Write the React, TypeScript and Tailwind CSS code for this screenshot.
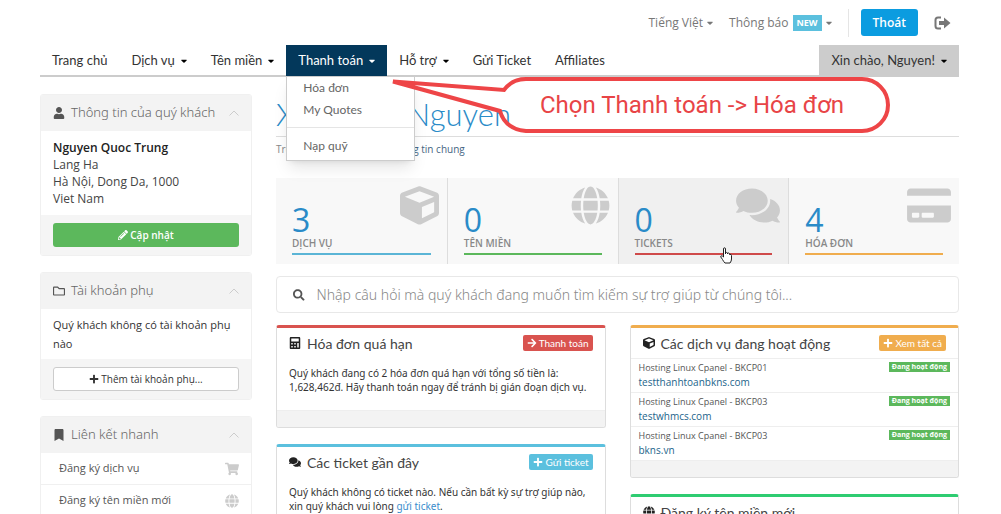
import type { ReactNode } from 'react';
import type { IconType } from 'react-icons';
import {
  FaArrowRight,
  FaBookmark,
  FaCalculator,
  FaCaretDown,
  FaComments,
  FaCreditCard,
  FaCube,
  FaGlobe,
  FaPencilAlt,
  FaPlus,
  FaRegFolder,
  FaSearch,
  FaShoppingCart,
  FaUser,
} from 'react-icons/fa';

type NavItem = {
  label: string;
  menu?: boolean;
};

const NAV_ITEMS: NavItem[] = [
  { label: 'Trang chủ' },
  { label: 'Dịch vụ', menu: true },
  { label: 'Tên miền', menu: true },
  { label: 'Thanh toán', menu: true },
  { label: 'Hỗ trợ', menu: true },
  { label: 'Gửi Ticket' },
  { label: 'Affiliates' },
];

const TILES = [
  { label: 'Dịch vụ', count: 3, icon: FaCube, line: 'bg-[#5bb5d6]', active: false },
  { label: 'Tên miền', count: 0, icon: FaGlobe, line: 'bg-[#5cb85c]', active: false },
  { label: 'Tickets', count: 0, icon: FaComments, line: 'bg-[#cf4a4a]', active: true },
  { label: 'Hóa đơn', count: 4, icon: FaCreditCard, line: 'bg-[#f0ad4e]', active: false },
];

const SERVICES = [
  { name: 'Hosting Linux Cpanel - BKCP01', domain: 'testthanhtoanbkns.com' },
  { name: 'Hosting Linux Cpanel - BKCP03', domain: 'testwhmcs.com' },
  { name: 'Hosting Linux Cpanel - BKCP03', domain: 'bkns.vn' },
];

const SHORTCUTS = [
  { label: 'Đăng ký dịch vụ', icon: FaShoppingCart },
  { label: 'Đăng ký tên miền mới', icon: FaGlobe },
];

function BillingMenu() {
  return (
    <div className="absolute left-0 top-full z-20 w-[129px] border border-[#ccc] bg-white pb-1 text-[12px] text-[#666] shadow-lg">
      <a href="#invoices" className="block px-4 py-px leading-5">Hóa đơn</a>
      <a href="#quotes" className="block px-4 py-px leading-5">My Quotes</a>
      <hr className="mb-1 mt-1.5 border-[#e5e5e5]" />
      <a href="#funds" className="block px-4 pt-1 leading-5">Nạp quỹ</a>
    </div>
  );
}

// Speech bubble pointing at the invoices entry
function Callout() {
  return (
    <div className="pointer-events-none absolute left-[352px] top-[30px] z-30 h-[58px] w-[500px]">
      <svg viewBox="0 0 500 58" className="absolute inset-0 h-full w-full" fill="none">
        <path
          d="M1 6.500 L112 15 Q120 4 134 4 H470 A26 26 0 0 1 470 56 H134 Q113 54 108 36 Z"
          stroke="#ee4547"
          strokeWidth="4"
        />
      </svg>
      <p className="relative pl-[148px] pt-3 font-['Roboto',sans-serif] text-[24px] leading-9 text-[#e84446]">
        Chọn Thanh toán -&gt; Hóa đơn
      </p>
    </div>
  );
}

function TopBar() {
  return (
    <div className="flex h-[45px] items-center justify-end pr-2 text-[12px] text-[#777]">
      <button className="flex items-center gap-1">
        Tiếng Việt
        <FaCaretDown className="h-2.5 w-1.5" />
      </button>
      <button className="ml-4 flex items-center gap-1">
        Thông báo
        <span className="bg-[#5bc0de] px-1 text-[9px] font-bold leading-4 text-white">NEW</span>
        <FaCaretDown className="h-2.5 w-1.5" />
      </button>
      <span className="ml-4 h-7 border-l border-[#e5e5e5]" />
      <button className="ml-3 h-[27px] rounded-[3px] bg-[#0b9ce0] px-3 font-semibold text-white">Thoát</button>
      <a href="#logout" aria-label="Thoát" className="ml-4">
        <svg viewBox="0 0 17 14" className="h-3.5 w-[17px]" fill="none">
          <path d="M7 1.500H4Q1.500 1.500 1.500 4V10Q1.500 12.500 4 12.500H7" stroke="#777" strokeWidth="2" />
          <path d="M5 5H10V1.500L16.500 7L10 12.500V9H5Z" fill="#777" />
        </svg>
      </a>
    </div>
  );
}

function NavBar() {
  return (
    <nav className="relative flex h-8 justify-between border-b-2 border-[#ccc] font-['Lato','Open_Sans',sans-serif] text-[13px] text-[#333]">
      <div className="flex">
        {NAV_ITEMS.map((item) => {
          const open = item.label === 'Thanh toán';
          return (
            <div key={item.label} className="relative h-[31px]">
              {item.menu ? (
                <button className={`flex h-full items-center gap-1.5 px-3 ${open ? 'bg-[#03385b] text-white' : ''}`}>
                  {item.label}
                  <FaCaretDown className={`h-3 w-1.5 ${open ? 'text-white' : 'text-black'}`} />
                </button>
              ) : (
                <a href="#page" className="flex h-full items-center px-3">{item.label}</a>
              )}
              {open && <BillingMenu />}
            </div>
          );
        })}
      </div>
      <button className="flex h-8 items-center gap-1.5 bg-[#ccc] px-3">
        Xin chào, Nguyen!
        <FaCaretDown className="h-3 w-1.5 text-black" />
      </button>
      <Callout />
    </nav>
  );
}

function SidePanel({ title, icon: Icon, children }: { title: string; icon: IconType; children: ReactNode }) {
  return (
    <section className="overflow-hidden rounded-[3px] border border-[#f0f0f0] bg-white">
      <header className="flex h-9 items-center gap-1.5 bg-[#f3f3f3] px-3">
        <Icon className="size-3 shrink-0 text-[#555]" />
        <h3 className="whitespace-nowrap font-['Noto_Sans',sans-serif] text-[13px] font-light text-[#666]">{title}</h3>
        <svg viewBox="0 0 10 6" className="ml-auto h-1.5 w-2.5 shrink-0" fill="none" stroke="#ccc">
          <path d="M.5 5.500L5 1L9.500 5.500" />
        </svg>
      </header>
      {children}
    </section>
  );
}

function Sidebar() {
  return (
    <aside className="w-[212px] shrink-0 space-y-4">
      <SidePanel title="Thông tin của quý khách" icon={FaUser}>
        <address className="px-3 pb-2 pt-2 text-[12px] not-italic leading-[17px] text-[#444]">
          <strong className="block font-semibold text-[#222]">Nguyen Quoc Trung</strong>
          Lang Ha
          <br />
          Hà Nội, Dong Da, 1000
          <br />
          Viet Nam
        </address>
        <div className="bg-[#f5f5f5] px-3 py-2">
          <button className="flex h-6 w-full items-center justify-center gap-0.5 rounded-[3px] bg-[#5cb85c] text-[10px] font-semibold text-white">
            <FaPencilAlt className="size-2.5" />
            Cập nhật
          </button>
        </div>
      </SidePanel>

      <SidePanel title="Tài khoản phụ" icon={FaRegFolder}>
        <p className="px-3 py-1.5 text-[11px] leading-[19px] text-[#333]">Quý khách không có tài khoản phụ nào</p>
        <div className="bg-[#f5f5f5] px-3 py-2">
          <button className="flex h-6 w-full items-center justify-center gap-0.5 rounded-[3px] border border-[#ccc] bg-white text-[10px] text-[#333]">
            <FaPlus className="size-2.5" />
            Thêm tài khoản phụ...
          </button>
        </div>
      </SidePanel>

      <SidePanel title="Liên kết nhanh" icon={FaBookmark}>
        {SHORTCUTS.map(({ label, icon: Icon }) => (
          <a
            key={label}
            href="#order"
            className="flex h-8 items-center justify-between border-b border-[#f0f0f0] pl-[18px] pr-3 text-[11px] text-[#555]"
          >
            {label}
            <Icon className="size-3.5 text-[#ccc]" />
          </a>
        ))}
      </SidePanel>
    </aside>
  );
}

type CardProps = {
  title: string;
  icon: IconType;
  accent: string;
  action?: string;
  actionIcon?: IconType;
  actionColor?: string;
  children?: ReactNode;
};

function Card({ title, icon: Icon, accent, action, actionIcon: ActionIcon, actionColor, children }: CardProps) {
  return (
    <section className={`overflow-hidden rounded-[3px] border border-t-[3px] border-x-[#ddd] border-b-[#ddd] bg-white ${accent}`}>
      <header className="flex h-[30px] items-center gap-1.5 px-3 font-['Lato','Open_Sans',sans-serif]">
        <Icon className="size-3 text-[#222]" />
        <h3 className="text-[14px] text-[#444]">{title}</h3>
        {action && ActionIcon && (
          <button className={`ml-auto flex h-4 items-center gap-0.5 rounded-[2px] px-1 text-[10px] text-white ${actionColor}`}>
            <ActionIcon className="size-2.5" />
            {action}
          </button>
        )}
      </header>
      {children}
      <div className="h-[17px] border-t border-[#eee] bg-[#f3f3f3]" />
    </section>
  );
}

function StatTiles() {
  return (
    <div className="grid grid-cols-4">
      {TILES.map(({ label, count, icon: Icon, line, active }, index) => (
        <a
          key={label}
          href="#stat"
          className={`relative block h-[86px] px-4 pt-[25px] ${active ? 'bg-[#f0f0f0]' : 'bg-[#f8f8f8]'} ${index > 0 ? 'border-l border-[#ddd]' : ''}`}
        >
          <Icon className={`absolute right-2 top-2 text-[#ccc] ${index < 2 ? 'size-[39px]' : 'h-[39px] w-11'}`} />
          <div className="text-[32px] leading-[34px] text-[#2a8bc8]">{count}</div>
          <div className="text-[10px] font-semibold uppercase leading-3 text-[#888]">{label}</div>
          <div className={`mt-1 h-0.5 ${line}`} />
          {active && (
            <svg viewBox="0 0 12 17" className="absolute right-[56px] top-[69px] z-10 h-[17px] w-3" fill="#fff" stroke="#222">
              <path
                strokeLinejoin="round"
                d="M3.500 10V2Q3.500 .8 4.500 .8T5.500 2V7V5.800Q6.500 5 7.500 6V7V6.200Q8.500 5.500 9.500 6.600V7.500Q11.500 6.800 11.500 8.500V12Q11.500 14 10 16H5Q3.500 14.500 2.500 12.500L.8 10Q.5 8.800 1.500 8.800T3.500 10Z"
              />
            </svg>
          )}
        </a>
      ))}
    </div>
  );
}

export default function App() {
  return (
    <div className="h-screen overflow-hidden bg-white pl-10 pr-[42px] font-['Open_Sans',sans-serif]">
      <TopBar />
      <NavBar />

      <div className="flex items-start gap-6 pt-[17px]">
        <Sidebar />

        <main className="min-w-0 flex-1">
          <h1 className="h-[43px] border-b border-[#ddd] font-['Lato','Open_Sans',sans-serif] text-[31px] font-light leading-10 text-[#2a8bc8]">
            Xin chào, Nguyen
          </h1>
          <p className="pt-1 text-[10px] leading-4 text-[#888]">
            Trung tâm khách hàng / <a href="#info" className="text-[#456582]">Thông tin chung</a>
          </p>

          <div className="space-y-3 pt-[21px]">
            <StatTiles />

            <label className="flex h-[37px] items-center gap-3 rounded-[4px] border border-[#e8e8e8] px-4">
              <FaSearch className="size-3 text-[#555]" />
              <input
                aria-label="Tìm kiếm"
                placeholder="Nhập câu hỏi mà quý khách đang muốn tìm kiếm sự trợ giúp từ chúng tôi..."
                className="w-full font-['Noto_Sans',sans-serif] text-[14px] font-light outline-none placeholder:text-[#888]"
              />
            </label>

            <div className="grid grid-cols-2 items-start gap-6">
              <div className="space-y-4">
                <Card
                  title="Hóa đơn quá hạn"
                  icon={FaCalculator}
                  accent="border-t-[#d9534f]"
                  action="Thanh toán"
                  actionIcon={FaArrowRight}
                  actionColor="bg-[#d9534f]"
                >
                  <p className="px-3 pb-4 pt-2 font-['Noto_Sans',sans-serif] text-[10px] leading-[14px] text-[#333]">
                    Quý khách đang có 2 hóa đơn quá hạn với tổng số tiền là:
                    <br />
                    1,628,462đ. Hãy thanh toán ngay để tránh bị gián đoạn dịch vụ.
                  </p>
                </Card>
                <Card
                  title="Các ticket gần đây"
                  icon={FaComments}
                  accent="border-t-[#5bc0de]"
                  action="Gửi ticket"
                  actionIcon={FaPlus}
                  actionColor="bg-[#5bc0de]"
                >
                  <p className="px-3 pb-4 pt-2 font-['Noto_Sans',sans-serif] text-[10px] leading-[14px] text-[#333]">
                    Quý khách không có ticket nào. Nếu cần bất kỳ sự trợ giúp nào,
                    <br />
                    xin quý khách vui lòng <a href="#ticket" className="text-[#3a8dcc]">gửi ticket</a>.
                  </p>
                </Card>
              </div>

              <div className="space-y-4">
                <Card
                  title="Các dịch vụ đang hoạt động"
                  icon={FaCube}
                  accent="border-t-[#f0ad4e]"
                  action="Xem tất cả"
                  actionIcon={FaPlus}
                  actionColor="bg-[#f0ad4e]"
                >
                  {SERVICES.map((service) => (
                    <div key={service.domain} className="flex h-[34px] items-start justify-between border-t border-[#eee] px-2 pt-0.5">
                      <div className="leading-[14px]">
                        <span className="block text-[9px] text-[#555]">{service.name}</span>
                        <a href="#service" className="block text-[10px] text-[#23648b]">{service.domain}</a>
                      </div>
                      <span className="mt-px bg-[#5cb85c] px-[3px] text-[7px] font-bold leading-[10px] text-white">Đang hoạt động</span>
                    </div>
                  ))}
                </Card>
                <Card title="Đăng ký tên miền mới" icon={FaGlobe} accent="border-t-[#2ecc71]" />
              </div>
            </div>
          </div>
        </main>
      </div>
    </div>
  );
}
